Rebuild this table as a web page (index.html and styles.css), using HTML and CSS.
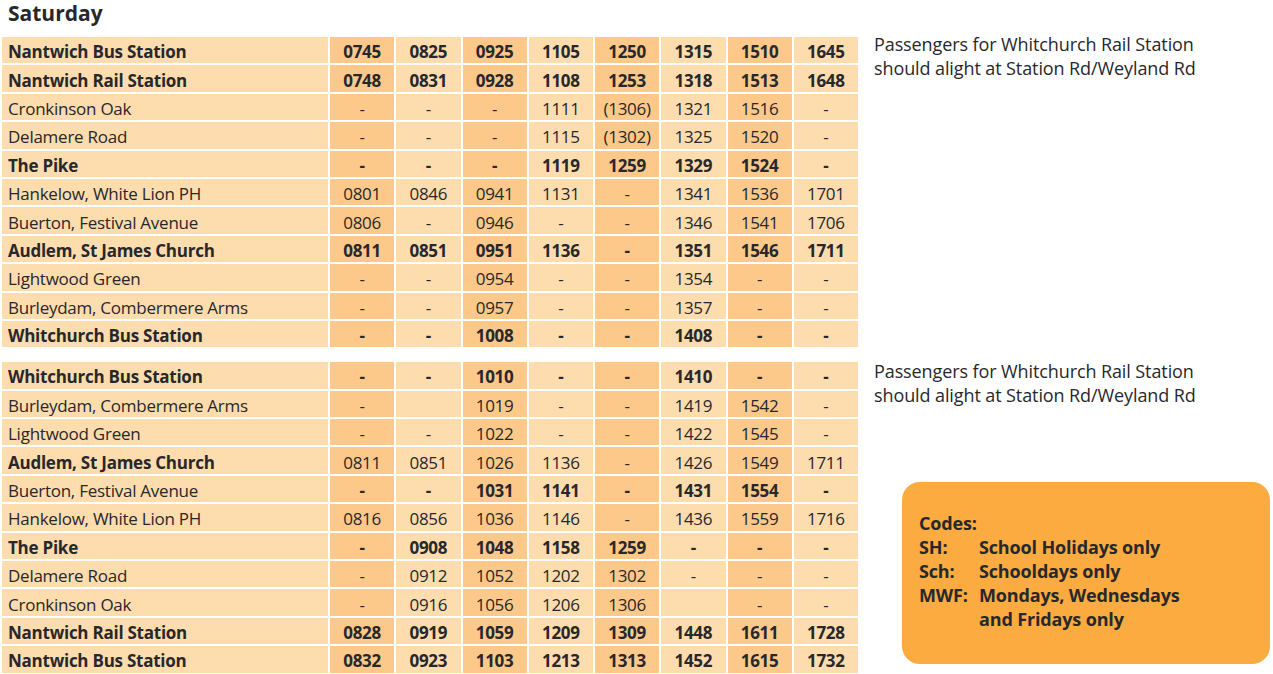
FILE: index.html
```html
<!DOCTYPE html>
<html lang="en">
<head>
<meta charset="utf-8">
<title>Saturday timetable</title>
<link rel="stylesheet" href="styles.css">
</head>
<body>
<h1 class="day">Saturday</h1>

<section class="section">
  <table class="tt">
    <colgroup><col class="c-stop"><col class="c-d"><col class="c-l"><col class="c-d"><col class="c-l"><col class="c-d"><col class="c-l"><col class="c-d"><col class="c-l"></colgroup>
    <tr class="b"><th>Nantwich Bus Station</th><td>0745</td><td>0825</td><td>0925</td><td>1105</td><td>1250</td><td>1315</td><td>1510</td><td>1645</td></tr>
    <tr class="b"><th>Nantwich Rail Station</th><td>0748</td><td>0831</td><td>0928</td><td>1108</td><td>1253</td><td>1318</td><td>1513</td><td>1648</td></tr>
    <tr><th>Cronkinson Oak</th><td>-</td><td>-</td><td>-</td><td>1111</td><td>(1306)</td><td>1321</td><td>1516</td><td>-</td></tr>
    <tr><th>Delamere Road</th><td>-</td><td>-</td><td>-</td><td>1115</td><td>(1302)</td><td>1325</td><td>1520</td><td>-</td></tr>
    <tr class="b"><th>The Pike</th><td>-</td><td>-</td><td>-</td><td>1119</td><td>1259</td><td>1329</td><td>1524</td><td>-</td></tr>
    <tr><th>Hankelow, White Lion PH</th><td>0801</td><td>0846</td><td>0941</td><td>1131</td><td>-</td><td>1341</td><td>1536</td><td>1701</td></tr>
    <tr><th>Buerton, Festival Avenue</th><td>0806</td><td>-</td><td>0946</td><td>-</td><td>-</td><td>1346</td><td>1541</td><td>1706</td></tr>
    <tr class="b"><th>Audlem, St James Church</th><td>0811</td><td>0851</td><td>0951</td><td>1136</td><td>-</td><td>1351</td><td>1546</td><td>1711</td></tr>
    <tr><th>Lightwood Green</th><td>-</td><td>-</td><td>0954</td><td>-</td><td>-</td><td>1354</td><td>-</td><td>-</td></tr>
    <tr><th>Burleydam, Combermere Arms</th><td>-</td><td>-</td><td>0957</td><td>-</td><td>-</td><td>1357</td><td>-</td><td>-</td></tr>
    <tr class="b"><th>Whitchurch Bus Station</th><td>-</td><td>-</td><td>1008</td><td>-</td><td>-</td><td>1408</td><td>-</td><td>-</td></tr>
  </table>
  <aside class="side side-top">
    <p class="note">Passengers for Whitchurch Rail Station<br>should alight at Station Rd/Weyland Rd</p>
  </aside>
</section>

<section class="section section-2">
  <table class="tt">
    <colgroup><col class="c-stop"><col class="c-d"><col class="c-l"><col class="c-d"><col class="c-l"><col class="c-d"><col class="c-l"><col class="c-d"><col class="c-l"></colgroup>
    <tr class="b"><th>Whitchurch Bus Station</th><td>-</td><td>-</td><td>1010</td><td>-</td><td>-</td><td>1410</td><td>-</td><td>-</td></tr>
    <tr><th>Burleydam, Combermere Arms</th><td>-</td><td></td><td>1019</td><td>-</td><td>-</td><td>1419</td><td>1542</td><td>-</td></tr>
    <tr><th>Lightwood Green</th><td>-</td><td>-</td><td>1022</td><td>-</td><td>-</td><td>1422</td><td>1545</td><td>-</td></tr>
    <tr><th class="bn">Audlem, St James Church</th><td>0811</td><td>0851</td><td>1026</td><td>1136</td><td>-</td><td>1426</td><td>1549</td><td>1711</td></tr>
    <tr class="bt"><th>Buerton, Festival Avenue</th><td>-</td><td>-</td><td>1031</td><td>1141</td><td>-</td><td>1431</td><td>1554</td><td>-</td></tr>
    <tr><th>Hankelow, White Lion PH</th><td>0816</td><td>0856</td><td>1036</td><td>1146</td><td>-</td><td>1436</td><td>1559</td><td>1716</td></tr>
    <tr class="b"><th>The Pike</th><td>-</td><td>0908</td><td>1048</td><td>1158</td><td>1259</td><td>-</td><td>-</td><td>-</td></tr>
    <tr><th>Delamere Road</th><td>-</td><td>0912</td><td>1052</td><td>1202</td><td>1302</td><td>-</td><td>-</td><td>-</td></tr>
    <tr><th>Cronkinson Oak</th><td>-</td><td>0916</td><td>1056</td><td>1206</td><td>1306</td><td></td><td>-</td><td>-</td></tr>
    <tr class="b"><th>Nantwich Rail Station</th><td>0828</td><td>0919</td><td>1059</td><td>1209</td><td>1309</td><td>1448</td><td>1611</td><td>1728</td></tr>
    <tr class="b"><th>Nantwich Bus Station</th><td>0832</td><td>0923</td><td>1103</td><td>1213</td><td>1313</td><td>1452</td><td>1615</td><td>1732</td></tr>
  </table>
  <aside class="side side-bottom">
    <p class="note">Passengers for Whitchurch Rail Station<br>should alight at Station Rd/Weyland Rd</p>
    <div class="codes">
      <div class="codes-title">Codes:</div>
      <div class="code"><span class="code-k">SH:</span><span>School Holidays only</span></div>
      <div class="code"><span class="code-k">Sch:</span><span>Schooldays only</span></div>
      <div class="code"><span class="code-k">MWF:</span><span>Mondays, Wednesdays<br>and Fridays only</span></div>
    </div>
  </aside>
</section>
</body>
</html>
```

FILE: styles.css
```css
html, body {
  margin: 0;
  padding: 0;
  background: #ffffff;
}

body {
  font-family: "Open Sans", "Liberation Sans", sans-serif;
  color: #28282c;
  width: 1273px;
  height: 674px;
  overflow: hidden;
}

.day {
  margin: 0;
  padding: 0 0 0 8px;
  height: 35px;
  font-size: 21px;
  line-height: 26px;
  font-weight: 700;
  color: #28282c;
}

.section {
  display: flex;
  align-items: flex-start;
}

.section-2 {
  margin-top: 11px;
}

.tt {
  border-collapse: separate;
  border-spacing: 2px;
  table-layout: fixed;
  width: 860px;
  font-size: 17px;
  letter-spacing: -0.25px;
}

.c-stop { width: 326px; }
.c-d { width: 64.25px; background: #fcc98a; }
.c-l { width: 64.25px; background: #fddcae; }

.tt th,
.tt td {
  height: 22.4px;
  padding: 4px 0 0;
  font-weight: 400;
  white-space: nowrap;
  line-height: 20px;
  vertical-align: middle;
}

.tt th {
  text-align: left;
  padding-left: 6px;
  background: #fddcae;
}

.tt td {
  text-align: center;
}

.tt tr.b th,
.tt tr.b td,
.tt tr.bt td,
.tt th.bn {
  font-weight: 700;
}

.side {
  margin-left: 14px;
  display: flex;
  flex-direction: column;
}

.side-top { margin-top: -3px; }
.side-bottom { margin-top: -1px; }

.note {
  margin: 0;
  font-size: 18px;
  line-height: 24px;
  letter-spacing: -0.1px;
}

.codes {
  margin-top: 75px;
  margin-left: 28px;
  width: 368px;
  height: 182px;
  box-sizing: border-box;
  padding: 29px 17px 0;
  background: #fbab3f;
  border-radius: 18px;
  font-size: 18px;
  line-height: 24px;
  font-weight: 700;
  letter-spacing: -0.15px;
}

.code {
  display: flex;
}

.code-k {
  width: 60px;
  flex: none;
}
```
